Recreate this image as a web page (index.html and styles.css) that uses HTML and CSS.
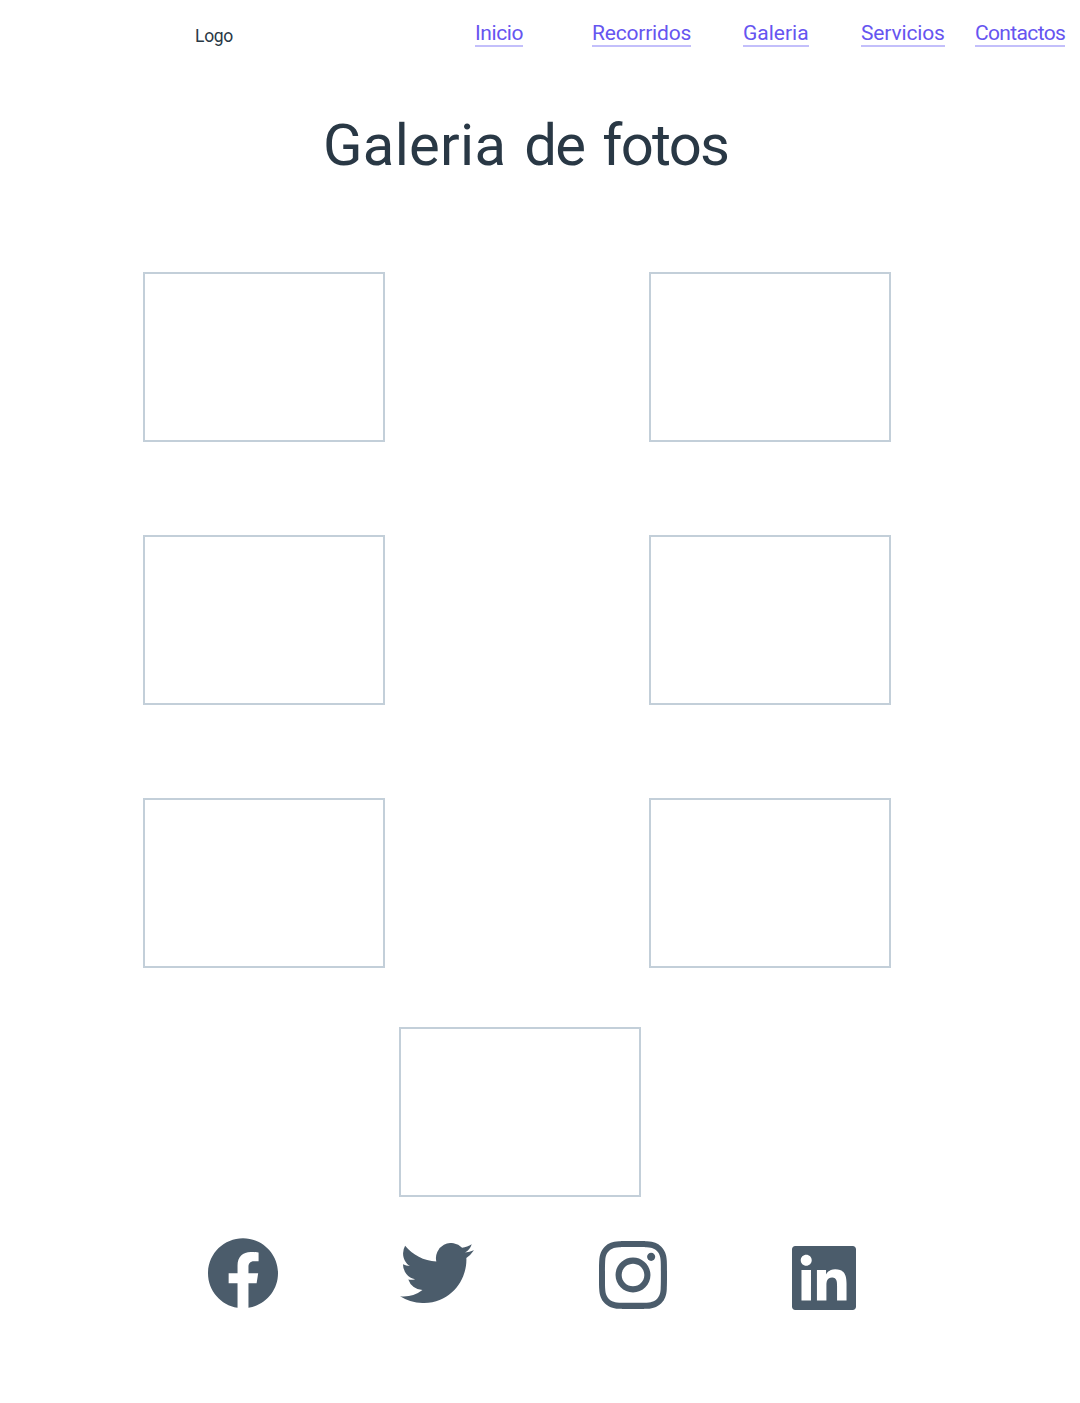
FILE: index.html
```html
<!DOCTYPE html>
<html lang="es">
<head>
<meta charset="utf-8">
<title>Galeria de fotos</title>
<link rel="stylesheet" href="styles.css">
</head>
<body>
<header class="header">
  <div class="logo">Logo</div>
  <nav class="nav">
    <a class="link inicio" href="#">Inicio</a>
    <a class="link recorridos" href="#">Recorridos</a>
    <a class="link galeria" href="#">Galeria</a>
    <a class="link servicios" href="#">Servicios</a>
    <a class="link contactos" href="#">Contactos</a>
  </nav>
</header>
<main>
  <h1 class="title"><span class="wide">Galeria</span> <span class="tight">de</span> <span class="tight">fotos</span></h1>
  <div class="gallery">
    <div class="photo"></div>
    <div class="photo"></div>
    <div class="photo"></div>
    <div class="photo"></div>
    <div class="photo"></div>
    <div class="photo"></div>
  </div>
  <div class="photo last"></div>
</main>
<footer class="social">
  <svg class="facebook" viewBox="0 0.073 24 23.854"><path d="M24 12.073c0-6.627-5.373-12-12-12s-12 5.373-12 12c0 5.99 4.388 10.954 10.125 11.854v-8.385H7.078v-3.47h3.047V9.43c0-3.007 1.792-4.669 4.533-4.669 1.312 0 2.686.235 2.686.235v2.953H15.83c-1.491 0-1.956.925-1.956 1.874v2.25h3.328l-.532 3.47h-2.796v8.385C19.612 23.027 24 18.062 24 12.073z"/></svg>
  <svg class="twitter" viewBox="0 2.25 24 19.5"><path d="M23.953 4.57a10 10 0 01-2.825.775 4.958 4.958 0 002.163-2.723c-.951.555-2.005.959-3.127 1.184a4.92 4.92 0 00-8.384 4.482C7.69 8.095 4.067 6.13 1.64 3.162a4.822 4.822 0 00-.666 2.475c0 1.71.87 3.213 2.188 4.096a4.904 4.904 0 01-2.228-.616v.06a4.923 4.923 0 003.946 4.827 4.996 4.996 0 01-2.212.085 4.936 4.936 0 004.604 3.417 9.867 9.867 0 01-6.102 2.105c-.39 0-.779-.023-1.17-.067a13.995 13.995 0 007.557 2.209c9.053 0 13.998-7.496 13.998-13.985 0-.21 0-.42-.015-.63A9.935 9.935 0 0024 4.59z"/></svg>
  <svg class="instagram" viewBox="0 0 24 24"><path d="M12 0C8.74 0 8.333.015 7.053.072 5.775.132 4.905.333 4.14.63c-.789.306-1.459.717-2.126 1.384S.935 3.35.63 4.14C.333 4.905.131 5.775.072 7.053.012 8.333 0 8.74 0 12s.015 3.667.072 4.947c.06 1.277.261 2.148.558 2.913.306.788.717 1.459 1.384 2.126.667.666 1.336 1.079 2.126 1.384.766.296 1.636.499 2.913.558C8.333 23.988 8.74 24 12 24s3.667-.015 4.947-.072c1.277-.06 2.148-.262 2.913-.558.788-.306 1.459-.718 2.126-1.384.666-.667 1.079-1.335 1.384-2.126.296-.765.499-1.636.558-2.913.06-1.28.072-1.687.072-4.947s-.015-3.667-.072-4.947c-.06-1.277-.262-2.149-.558-2.913-.306-.789-.718-1.459-1.384-2.126C21.319 1.347 20.651.935 19.86.63c-.765-.297-1.636-.499-2.913-.558C15.667.012 15.26 0 12 0zm0 2.16c3.203 0 3.585.016 4.85.071 1.17.055 1.805.249 2.227.415.562.217.96.477 1.382.896.419.42.679.819.896 1.381.164.422.36 1.057.413 2.227.057 1.266.07 1.646.07 4.85s-.015 3.585-.074 4.85c-.061 1.17-.256 1.805-.421 2.227-.224.562-.479.96-.899 1.382-.419.419-.824.679-1.38.896-.42.164-1.065.36-2.235.413-1.274.057-1.649.07-4.859.07-3.211 0-3.586-.015-4.859-.074-1.171-.061-1.816-.256-2.236-.421-.569-.224-.96-.479-1.379-.899-.421-.419-.69-.824-.9-1.38-.165-.42-.359-1.065-.42-2.235-.045-1.26-.061-1.649-.061-4.844 0-3.196.016-3.586.061-4.861.061-1.17.255-1.814.42-2.234.21-.57.479-.96.9-1.381.419-.419.81-.689 1.379-.898.42-.166 1.051-.361 2.221-.421 1.275-.045 1.65-.06 4.859-.06l.045.03zm0 3.678c-3.405 0-6.162 2.76-6.162 6.162 0 3.405 2.76 6.162 6.162 6.162 3.405 0 6.162-2.76 6.162-6.162 0-3.405-2.76-6.162-6.162-6.162zM12 16c-2.21 0-4-1.79-4-4s1.79-4 4-4 4 1.79 4 4-1.79 4-4 4zm7.846-10.405c0 .795-.646 1.44-1.44 1.44-.795 0-1.44-.646-1.44-1.44 0-.794.646-1.439 1.44-1.439.793-.001 1.44.645 1.44 1.439z"/></svg>
  <svg class="linkedin" viewBox="0 0 24 24"><path d="M20.447 20.452h-3.554v-5.569c0-1.328-.027-3.037-1.852-3.037-1.853 0-2.136 1.445-2.136 2.939v5.667H9.351V9h3.414v1.561h.046c.477-.9 1.637-1.85 3.37-1.85 3.601 0 4.267 2.37 4.267 5.455v6.286zM5.337 7.433c-1.144 0-2.063-.926-2.063-2.065 0-1.138.92-2.063 2.063-2.063 1.14 0 2.064.925 2.064 2.063 0 1.139-.925 2.065-2.064 2.065zm1.782 13.019H3.555V9h3.564v11.452zM22.800 0H1.200C.54 0 0 .54 0 1.200v21.600C0 23.460.54 24 1.200 24h21.600c.66 0 1.200-.54 1.200-1.200V1.200C24 .54 23.460 0 22.800 0z"/></svg>
</footer>
</body>
</html>
```
FILE: styles.css
```css
* { box-sizing: border-box; }
body {
  margin: 0;
  min-height: 1403px;
  background: #fff;
  color: #293845;
  font-family: Roboto, "Liberation Sans", sans-serif;
}
.header {
  display: flex;
  justify-content: space-between;
  height: 60px;
  padding: 20px 15px 0 195px;
}
.logo {
  padding-top: 5px;
  font-size: 17.5px;
  letter-spacing: -0.3px;
  line-height: 22px;
}
.nav { display: flex; }
.link {
  height: 27px;
  border-bottom: 2px solid #c3bffb;
  color: #6655f0;
  font-size: 21px;
  line-height: 26px;
  text-decoration: none;
  white-space: nowrap;
}
.inicio { width: 48px; margin-right: 69px; letter-spacing: -0.4px; }
.recorridos { width: 99px; margin-right: 52px; letter-spacing: -0.2px; }
.galeria { width: 66px; margin-right: 52px; }
.servicios { width: 84px; margin-right: 30px; letter-spacing: -0.15px; }
.contactos { width: 90px; letter-spacing: -0.65px; }
.title {
  margin: 50px 0 92px 323px;
  font-size: 58px;
  font-weight: 400;
  line-height: 70px;
  white-space: nowrap;
  word-spacing: 3.5px;
}
.wide { letter-spacing: 0.3px; }
.tight { letter-spacing: -1.7px; }
.gallery {
  display: grid;
  grid-template-columns: 242px 242px;
  gap: 93px 264px;
  margin-left: 143px;
}
.photo {
  width: 242px;
  height: 170px;
  border: 2px solid #c3cfd9;
}
.last { margin: 59px 0 0 399px; }
.social {
  display: flex;
  align-items: flex-start;
  padding: 41px 0 0 208px;
  fill: #4b5c6b;
}
.facebook { width: 70px; height: 70px; margin-right: 122px; }
.twitter { width: 74px; height: 60px; margin: 5px 125px 0 0; }
.instagram { width: 68px; height: 68px; margin: 3px 125px 0 0; }
.linkedin { width: 64px; height: 64px; margin-top: 8px; }
```
